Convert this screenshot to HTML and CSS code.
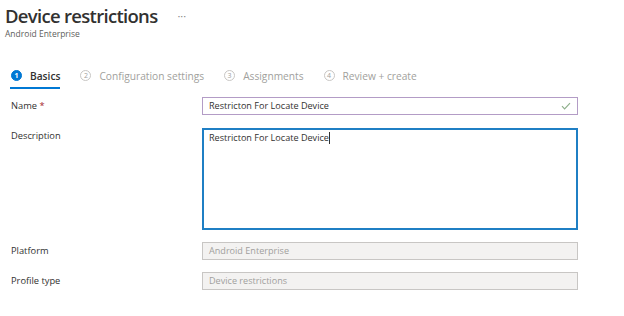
FILE: index.html
```html
<!DOCTYPE html>
<html>
<head>
<meta charset="utf-8">
<link rel="stylesheet" href="styles.css">
</head>
<body>
<div class="page">
  <header class="header">
    <div class="title-row">
      <h1 class="title">Device restrictions</h1>
      <span class="more">···</span>
    </div>
    <div class="subtitle">Android Enterprise</div>
  </header>

  <nav class="tabs">
    <div class="tab active"><span class="num">1</span><span class="tab-label">Basics</span></div>
    <div class="tab"><span class="num">2</span><span class="tab-label">Configuration settings</span></div>
    <div class="tab"><span class="num">3</span><span class="tab-label">Assignments</span></div>
    <div class="tab"><span class="num">4</span><span class="tab-label">Review + create</span></div>
  </nav>

  <div class="form">
    <div class="row">
      <div class="label">Name <span class="req">*</span></div>
      <div class="field input valid">
        <span class="value">Restricton For Locate Device</span>
        <svg class="check" width="10" height="8" viewBox="0 0 10 8"><path d="M1 4.2 L3.6 6.8 L9 1.2" fill="none" stroke="#8fb08c" stroke-width="1.2"/></svg>
      </div>
    </div>
    <div class="row">
      <div class="label">Description</div>
      <div class="field textarea"><span class="value">Restricton For Locate Device</span><span class="caret"></span></div>
    </div>
    <div class="row">
      <div class="label">Platform</div>
      <div class="field input disabled"><span class="value">Android Enterprise</span></div>
    </div>
    <div class="row">
      <div class="label">Profile type</div>
      <div class="field input disabled"><span class="value">Device restrictions</span></div>
    </div>
  </div>
</div>
</body>
</html>
```

FILE: styles.css
```css
* { box-sizing: border-box; }
html, body { margin: 0; padding: 0; background: #fff; }
body {
  font-family: "Open Sans", "Noto Sans", sans-serif;
  color: #323130;
  width: 624px;
  height: 316px;
  overflow: hidden;
}
.header { padding: 5px 0 0 5px; }
.title-row { display: flex; align-items: center; height: 22px; }
.title {
  margin: 0;
  font-size: 18.5px;
  font-weight: 600;
  line-height: 22px;
  letter-spacing: -0.7px;
  color: #323130;
}
.more {
  margin-left: 20px;
  font-size: 11px;
  color: #8a8886;
  line-height: 10px;
  padding-bottom: 1px;
}
.subtitle {
  font-size: 8.5px;
  color: #605e5c;
  line-height: 12px;
  margin-top: 1px;
}
.tabs {
  display: flex;
  gap: 19px;
  padding-left: 10px;
  margin-top: 24px;
}
.tab {
  display: flex;
  align-items: center;
  gap: 8px;
  height: 25px;
  font-size: 10.2px;
  color: #a19f9d;
  border-bottom: 2px solid transparent;
  padding-left: 1px;
}
.tab.active {
  color: #323130;
  border-bottom-color: #0078d4;
  font-weight: 600;
}
.num {
  width: 11px;
  height: 11px;
  border-radius: 50%;
  border: 1px solid #c8c6c4;
  font-size: 7px;
  line-height: 9px;
  text-align: center;
  font-weight: 400;
  color: #a19f9d;
}
.tab.active .num {
  background: #0078d4;
  border-color: #0078d4;
  color: #fff;
  font-weight: 700;
}
.form {
  margin-top: 8px;
  padding-left: 11px;
  display: flex;
  flex-direction: column;
  gap: 12px;
}
.row { display: flex; align-items: flex-start; }
.label {
  width: 191px;
  font-size: 9.3px;
  color: #323130;
  line-height: 18px;
}
.req { color: #a4262c; }
.field {
  width: 376px;
  font-size: 9.1px;
  line-height: 16px;
  padding: 0 6px;
  display: flex;
  align-items: center;
}
.input { height: 18px; border: 1px solid #c8c6c4; }
.input.valid { border-color: #b39cc6; justify-content: space-between; }
.textarea {
  height: 102px;
  border: 2px solid #1f7fc4;
  align-items: flex-start;
  padding: 0 5px;
  margin-top: 1px;
}
.caret { width: 1px; height: 12px; background: #323130; margin-top: 2px; }
.input.disabled {
  background: #f3f2f1;
  border-color: #c8c6c4;
  color: #a19f9d;
}
```
